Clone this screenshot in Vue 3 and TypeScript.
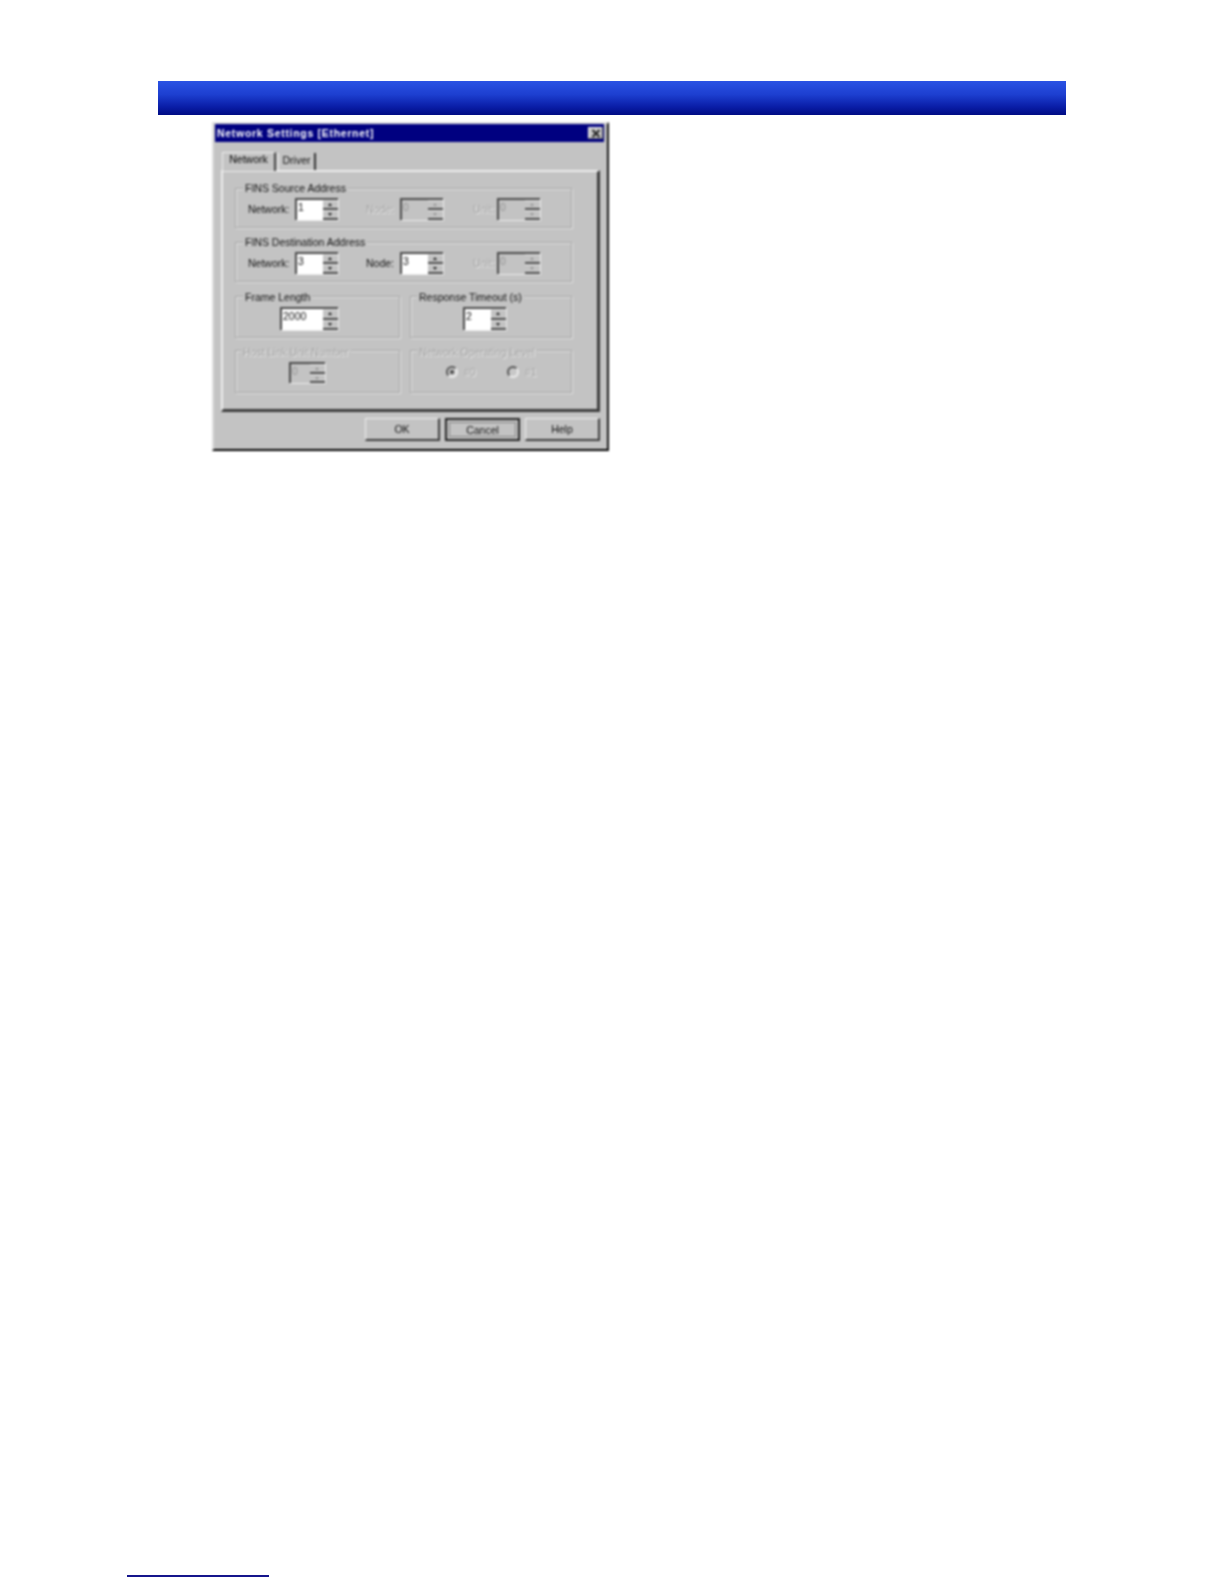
<script setup lang="ts">
const rows = [
  {
    title: 'FINS Source Address',
    fields: [
      { label: 'Network:', value: '1', off: false },
      { label: 'Node:', value: '0', off: true },
      { label: 'Unit:', value: '0', off: true },
    ],
  },
  {
    title: 'FINS Destination Address',
    fields: [
      { label: 'Network:', value: '3', off: false },
      { label: 'Node:', value: '3', off: false },
      { label: 'Unit:', value: '0', off: true },
    ],
  },
]
const buttons = ['OK', 'Cancel', 'Help']
</script>

<template>
  <div class="page">
    <div class="bar"></div>
    <div class="dialog">
      <div class="title">
        <span>Network Settings [Ethernet]</span>
        <div class="close">
          <svg width="10" height="9" viewBox="0 0 10 9"><path d="M1.5 1 L8.5 8 M8.5 1 L1.5 8" stroke="#222" stroke-width="2" fill="none" /></svg>
        </div>
      </div>
      <div class="tabs">
        <div class="tab active">Network</div>
        <div class="tab">Driver</div>
      </div>
      <div class="panel">
        <div v-for="row in rows" :key="row.title" class="group wide">
          <div class="legend">{{ row.title }}</div>
          <div class="fields">
            <div v-for="f in row.fields" :key="f.label" class="field">
              <div class="flabel" :class="{ off: f.off }">{{ f.label }}</div>
              <div class="spin" :class="{ dis: f.off }">
                <div class="val">{{ f.value }}</div>
                <div class="btns"><div class="up"></div><div class="down"></div></div>
              </div>
            </div>
          </div>
        </div>

        <div class="group tall left">
          <div class="legend">Frame Length</div>
          <div class="center">
            <div class="spin frame">
              <div class="val">2000</div>
              <div class="btns"><div class="up"></div><div class="down"></div></div>
            </div>
          </div>
        </div>
        <div class="group tall right">
          <div class="legend">Response Timeout (s)</div>
          <div class="center">
            <div class="spin">
              <div class="val">2</div>
              <div class="btns"><div class="up"></div><div class="down"></div></div>
            </div>
          </div>
        </div>

        <div class="group left low">
          <div class="legend off lowleg">Host Link Unit Number</div>
          <div class="center lowc">
            <div class="spin dis small">
              <div class="val">0</div>
              <div class="btns"><div class="up"></div><div class="down"></div></div>
            </div>
          </div>
        </div>
        <div class="group right low">
          <div class="legend off">Network Operating Level</div>
          <div class="radios">
            <div class="radio-item"><div class="radio on"></div><span class="off">#0</span></div>
            <div class="radio-item"><div class="radio"></div><span class="off">#1</span></div>
          </div>
        </div>
      </div>
      <div class="actions">
        <div v-for="b in buttons" :key="b" class="btn" :class="{ focus: b === 'Cancel' }">
          <span>{{ b }}</span>
        </div>
      </div>
    </div>
    <div class="foot"></div>
  </div>
</template>

<style scoped>
.page {
  width: 1224px;
  height: 1584px;
  background: #fff;
  padding-top: 81px;
  box-sizing: border-box;
  overflow: hidden;
  font-family: "Liberation Sans", Arial, sans-serif;
}
.bar {
  margin-left: 158px;
  width: 908px;
  height: 34px;
  background: linear-gradient(to bottom, #2a52e4 0%, #1d3fd0 40%, #0a1ea8 75%, #000c84 100%);
}
.dialog {
  margin-left: 212px;
  margin-top: 7px;
  width: 397px;
  height: 329px;
  box-sizing: border-box;
  background: #c3c3c3;
  border-top: 2px solid #dedede;
  border-left: 2px solid #dcdcdc;
  border-right: 2px solid #111;
  border-bottom: 2px solid #000;
  padding: 0 3px 0 1px;
  filter: blur(0.8px);
  color: #111;
  font-size: 11px;
}
.title {
  height: 18px;
  background: #000080;
  color: #fff;
  font-weight: 700;
  font-size: 10.5px;
  letter-spacing: 0.7px;
  display: flex;
  align-items: center;
  justify-content: space-between;
  padding: 0 1px 0 2px;
  white-space: nowrap;
}
.close {
  width: 15px;
  height: 12px;
  background: #c8c8c8;
  display: flex;
  align-items: center;
  justify-content: center;
  box-shadow: inset -1px -1px 0 #555, inset 1px 1px 0 #eee;
}
.tabs {
  display: flex;
  align-items: flex-end;
  height: 28px;
  margin-left: 7px;
}
.tab {
  height: 17px;
  line-height: 15px;
  width: 38px;
  margin-left: 2px;
  text-align: center;
  font-size: 10.5px;
  color: #111;
  box-sizing: border-box;
  border-left: 1px solid #ececec;
  border-right: 2px solid #333;
}
.tab.active {
  height: 19px;
  line-height: 13px;
  width: 54px;
  margin-left: 0;
  color: #000;
  position: relative;
  background: #c3c3c3;
  border-top: 1px solid #eee;
  border-left: 1px solid #eee;
  border-right: 2px solid #444;
  margin-bottom: -1px;
  z-index: 1;
}
.panel {
  margin-left: 6px;
  width: 379px;
  height: 242px;
  box-sizing: border-box;
  border-top: 2px solid #ececec;
  border-left: 2px solid #ececec;
  border-right: 3px solid #3c3c3c;
  border-bottom: 3px solid #3c3c3c;
  padding: 16px 0 0 12px;
  display: grid;
  grid-template-columns: 165px 162px;
  column-gap: 10px;
  grid-template-rows: 40px 40px 42px 43px;
  row-gap: 14px;
  align-content: start;
}
.group {
  position: relative;
  box-sizing: border-box;
  border: 1px solid #a4a4a4;
  box-shadow: 1px 1px 0 #e2e2e2, inset 1px 1px 0 #e2e2e2;
}
.wide { grid-column: 1 / 3; width: 337px; }
.panel .low { position: relative; top: -2px; height: 43px; }
.legend {
  position: absolute;
  left: 7px;
  top: -7px;
  padding: 0 2px;
  height: 13px;
  line-height: 13px;
  background: #c3c3c3;
  font-size: 10.5px;
  color: #111;
  white-space: nowrap;
}
.tall .legend { top: -6px; }
.low .legend { top: -5px; }
.right .legend { left: 6px; }
.lowleg { left: 5px; }
.fields {
  display: grid;
  grid-template-columns: 118px 107px 70px;
  padding: 9px 0 0 12px;
}
.field {
  display: flex;
  align-items: center;
}
.field:nth-child(1) .flabel { width: 47px; }
.field:nth-child(2) .flabel { width: 34px; }
.field:nth-child(3) .flabel { width: 24px; }
.flabel {
  font-size: 10.5px;
  color: #111;
  white-space: nowrap;
}
.off {
  color: #a2a2a2 !important;
  text-shadow: 1px 1px 0 #ececec;
}
.spin {
  position: relative;
  width: 43px;
  height: 22px;
  box-sizing: border-box;
  display: flex;
  background: #fff;
  border-top: 2px solid #4a4a4a;
  border-left: 2px solid #4a4a4a;
  box-shadow: 1px 1px 0 #ececec;
}
.spin.frame { width: 58px; margin-left: 44px; height: 23px; }
.right .spin { height: 23px; }
.spin.small { width: 36px; margin-left: 53px; height: 21px; }
.spin.dis { background: #c3c3c3; }
.val {
  flex: 1;
  font-size: 10.5px;
  line-height: 14px;
  padding-left: 1px;
  color: #111;
}
.spin.dis .val { color: #949494; }
.btns {
  width: 15px;
  display: flex;
  flex-direction: column;
  background: #c3c3c3;
}
.up, .down {
  flex: 1;
  position: relative;
  box-sizing: border-box;
  border-bottom: 2px solid #4a4a4a;
  border-top: 1px solid #e6e6e6;
}
.up::after, .down::after {
  content: "";
  position: absolute;
  left: 5px;
  top: 2px;
  border-left: 2.5px solid transparent;
  border-right: 2.5px solid transparent;
}
.up::after { border-bottom: 3px solid #222; }
.down::after { border-top: 3px solid #222; }
.spin.dis .up::after { border-bottom-color: #999; }
.spin.dis .down::after { border-top-color: #999; }
.center { padding-top: 10px; }
.lowc { padding-top: 11px; }
.right .center { padding-left: 52px; }
.radios {
  display: flex;
  padding: 15px 0 0 35px;
}
.radio-item {
  display: flex;
  align-items: center;
  gap: 6px;
  width: 61px;
  font-size: 10.5px;
}
.radio {
  width: 12px;
  height: 12px;
  border-radius: 50%;
  box-sizing: border-box;
  background: #c8c8c8;
  border: 2px solid;
  border-color: #555 #ececec #ececec #555;
}
.radio.on { background: radial-gradient(circle, #555 0 2px, #cfcfcf 2.5px); }
.actions {
  display: flex;
  gap: 5px;
  margin: 6px 0 0 150px;
}
.btn {
  width: 75px;
  height: 23px;
  box-sizing: border-box;
  display: flex;
  align-items: center;
  justify-content: center;
  font-size: 10.5px;
  color: #111;
  background: #c3c3c3;
  border-top: 1px solid #eee;
  border-left: 1px solid #eee;
  border-right: 2px solid #3c3c3c;
  border-bottom: 2px solid #3c3c3c;
}
.btn.focus {
  border: 2px solid #222;
  outline: 1px dotted #444;
  outline-offset: -5px;
}
.foot {
  margin-left: 127px;
  margin-top: 1124px;
  width: 142px;
  height: 2px;
  background: #15158c;
}
</style>
